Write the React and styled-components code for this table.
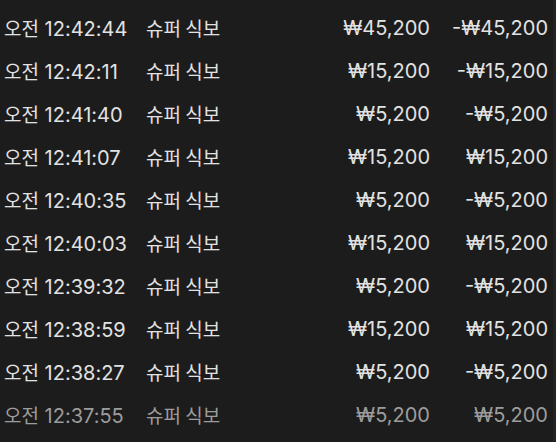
import styled, { createGlobalStyle } from "styled-components";

const GlobalStyle = createGlobalStyle`
  html, body {
    margin: 0;
    padding: 0;
    background: #1c1c1c;
  }
  body {
    font-family: Inter, "Noto Sans CJK KR", sans-serif;
  }
`;

const Page = styled.div`
  width: 556px;
  height: 442px;
  overflow: hidden;
  box-sizing: border-box;
  background: #1c1c1c;
  border-right: 3px solid #222;
  padding: 6px 5px 0 4px;
`;

const Row = styled.div`
  display: flex;
  align-items: center;
  height: 43px;
  font-size: 20px;
  color: ${(p) => (p.$faded ? "#9c9c9c" : "#e2e2e2")};
  white-space: nowrap;
`;

const Korean = styled.span`
  font-family: "Noto Sans CJK KR", sans-serif;
  font-size: 19px;
`;

const Time = styled.div`
  width: 142px;
`;

const Desc = styled.div`
  flex: 1;
`;

const Amount = styled.div`
  text-align: right;
`;

const Balance = styled.div`
  width: 118px;
  text-align: right;
`;

const rows = [
  ["12:42:44", "₩45,200", "-₩45,200"],
  ["12:42:11", "₩15,200", "-₩15,200"],
  ["12:41:40", "₩5,200", "-₩5,200"],
  ["12:41:07", "₩15,200", "₩15,200"],
  ["12:40:35", "₩5,200", "-₩5,200"],
  ["12:40:03", "₩15,200", "₩15,200"],
  ["12:39:32", "₩5,200", "-₩5,200"],
  ["12:38:59", "₩15,200", "₩15,200"],
  ["12:38:27", "₩5,200", "-₩5,200"],
  ["12:37:55", "₩5,200", "₩5,200"],
];

export default function App() {
  return (
    <>
      <GlobalStyle />
      <Page>
        {rows.map(([time, amount, balance], i) => (
          <Row key={time} $faded={i === rows.length - 1}>
            <Time>
              <Korean>오전</Korean> {time}
            </Time>
            <Desc>
              <Korean>슈퍼 식보</Korean>
            </Desc>
            <Amount>{amount}</Amount>
            <Balance>{balance}</Balance>
          </Row>
        ))}
      </Page>
    </>
  );
}
